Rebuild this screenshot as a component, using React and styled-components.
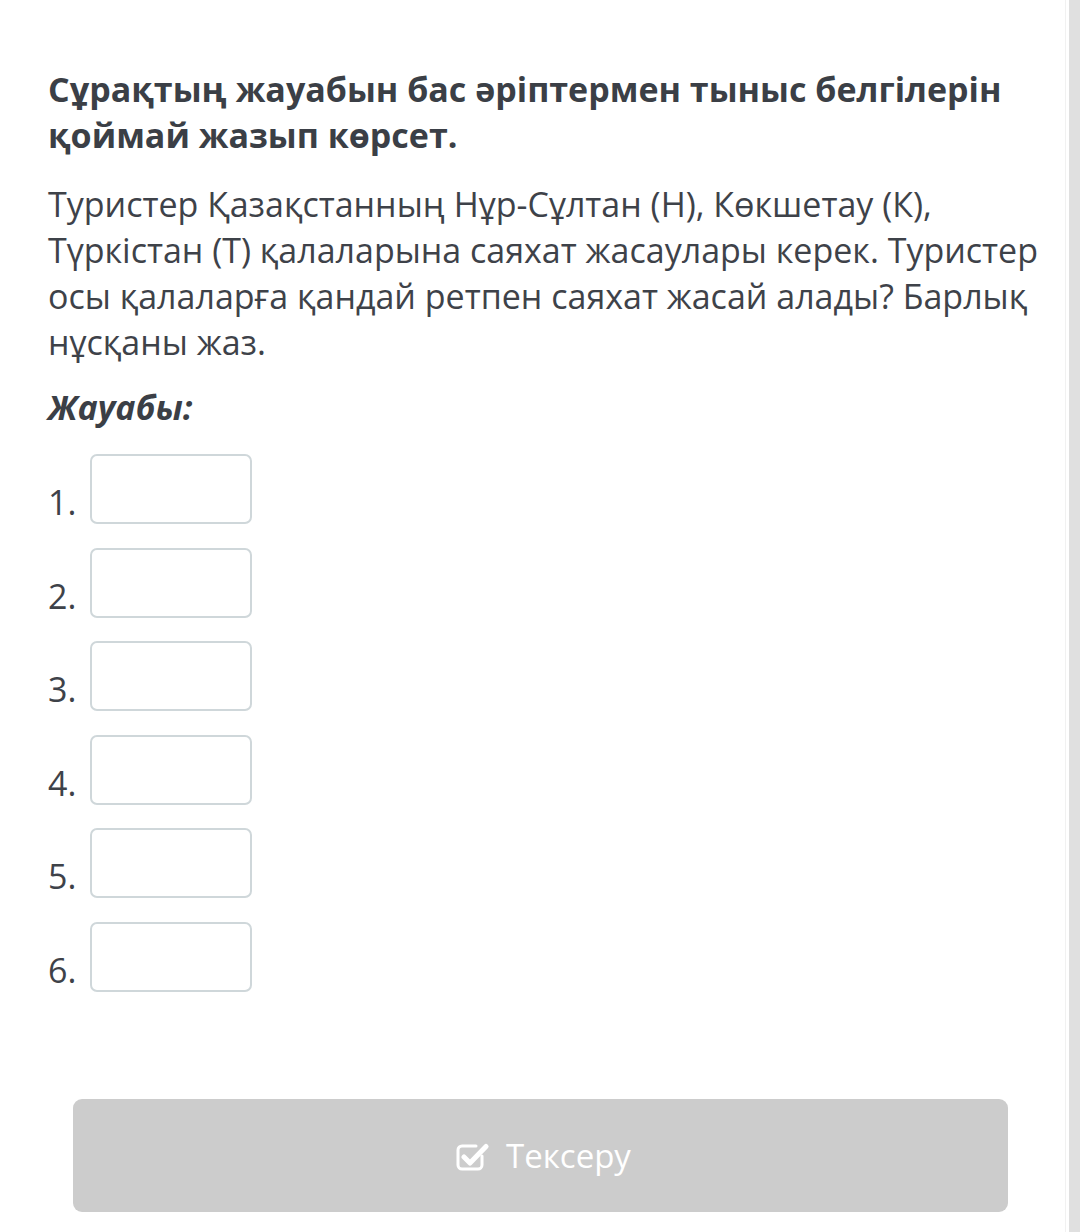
import React from "react";
import styled, { createGlobalStyle } from "styled-components";

const GlobalStyle = createGlobalStyle`
  html, body {
    margin: 0;
    padding: 0;
    background: #ffffff;
  }
  body {
    font-family: "Open Sans", "Noto Sans", "Liberation Sans", sans-serif;
    color: #3e4249;
  }
`;

const Page = styled.div`
  display: flex;
  min-height: 100vh;
  width: 1080px;
`;

const Main = styled.main`
  flex: 1;
  display: flex;
  flex-direction: column;
  min-width: 0;
`;

const Gutter = styled.div`
  width: 15px;
  display: flex;
  border-left: 1px solid #f1f1f1;
  padding-left: 3px;
  box-sizing: border-box;
`;

const Track = styled.div`
  flex: 1;
  background: #e0e0e0;
`;

const Content = styled.section`
  padding: 66px 20px 0 48px;
`;

const Question = styled.h2`
  margin: 0;
  font-size: 34px;
  line-height: 46px;
  font-weight: 700;
  color: #3b3f46;
`;

const Body = styled.p`
  margin: 23px 0 0;
  font-size: 34px;
  line-height: 46px;
  font-weight: 400;
`;

const AnswerLabel = styled.div`
  margin-top: 19px;
  font-size: 34px;
  line-height: 46px;
  font-weight: 700;
  font-style: italic;
  color: #3b3f46;
`;

const AnswerList = styled.ol`
  list-style: none;
  margin: 24px 0 0;
  padding: 0;
  display: flex;
  flex-direction: column;
  gap: 23.6px;
`;

const AnswerRow = styled.li`
  display: flex;
  align-items: flex-end;
`;

const Num = styled.span`
  width: 42px;
  font-size: 34px;
  line-height: 44px;
`;

const AnswerInput = styled.input`
  width: 162px;
  height: 70px;
  box-sizing: border-box;
  border: 2px solid #cfd7da;
  border-radius: 7px;
  background: #fff;
  outline: none;
  font: inherit;
`;

const Footer = styled.div`
  padding: 107px 57px 20px 73px;
`;

const CheckButton = styled.button`
  width: 100%;
  height: 113px;
  border: none;
  border-radius: 9px;
  background: #cccccc;
  color: #ffffff;
  font-family: "Open Sans", "Noto Sans", sans-serif;
  font-size: 33px;
  display: flex;
  align-items: center;
  justify-content: center;
  gap: 17px;
  padding: 0 0 0 5px;
  cursor: default;
`;

const CheckIcon = () => (
  <svg width="34" height="31" viewBox="0 0 34 31" fill="none">
    <path
      d="M27 16V25a4 4 0 0 1-4 4H7a4 4 0 0 1-4-4V10a4 4 0 0 1 4-4h14"
      stroke="#fff"
      strokeWidth="3"
      strokeLinecap="round"
    />
    <path
      d="M9 17l6 6L31 6.5"
      stroke="#fff"
      strokeWidth="5"
      strokeLinecap="round"
      strokeLinejoin="round"
    />
  </svg>
);

const answers = [1, 2, 3, 4, 5, 6];

export default function App() {
  return (
    <>
      <GlobalStyle />
      <Page>
        <Main>
          <Content>
            <Question>
              Сұрақтың жауабын бас әріптермен тыныс белгілерін қоймай жазып
              көрсет.
            </Question>
            <Body>
              Туристер Қазақстанның Нұр-Сұлтан (Н), Көкшетау (К), Түркістан (Т)
              қалаларына саяхат жасаулары керек. Туристер осы қалаларға қандай
              ретпен саяхат жасай алады? Барлық нұсқаны жаз.
            </Body>
            <AnswerLabel>Жауабы:</AnswerLabel>
            <AnswerList>
              {answers.map((n) => (
                <AnswerRow key={n}>
                  <Num>{n}.</Num>
                  <AnswerInput type="text" />
                </AnswerRow>
              ))}
            </AnswerList>
          </Content>
          <Footer>
            <CheckButton type="button">
              <CheckIcon />
              Тексеру
            </CheckButton>
          </Footer>
        </Main>
        <Gutter>
          <Track />
        </Gutter>
      </Page>
    </>
  );
}
